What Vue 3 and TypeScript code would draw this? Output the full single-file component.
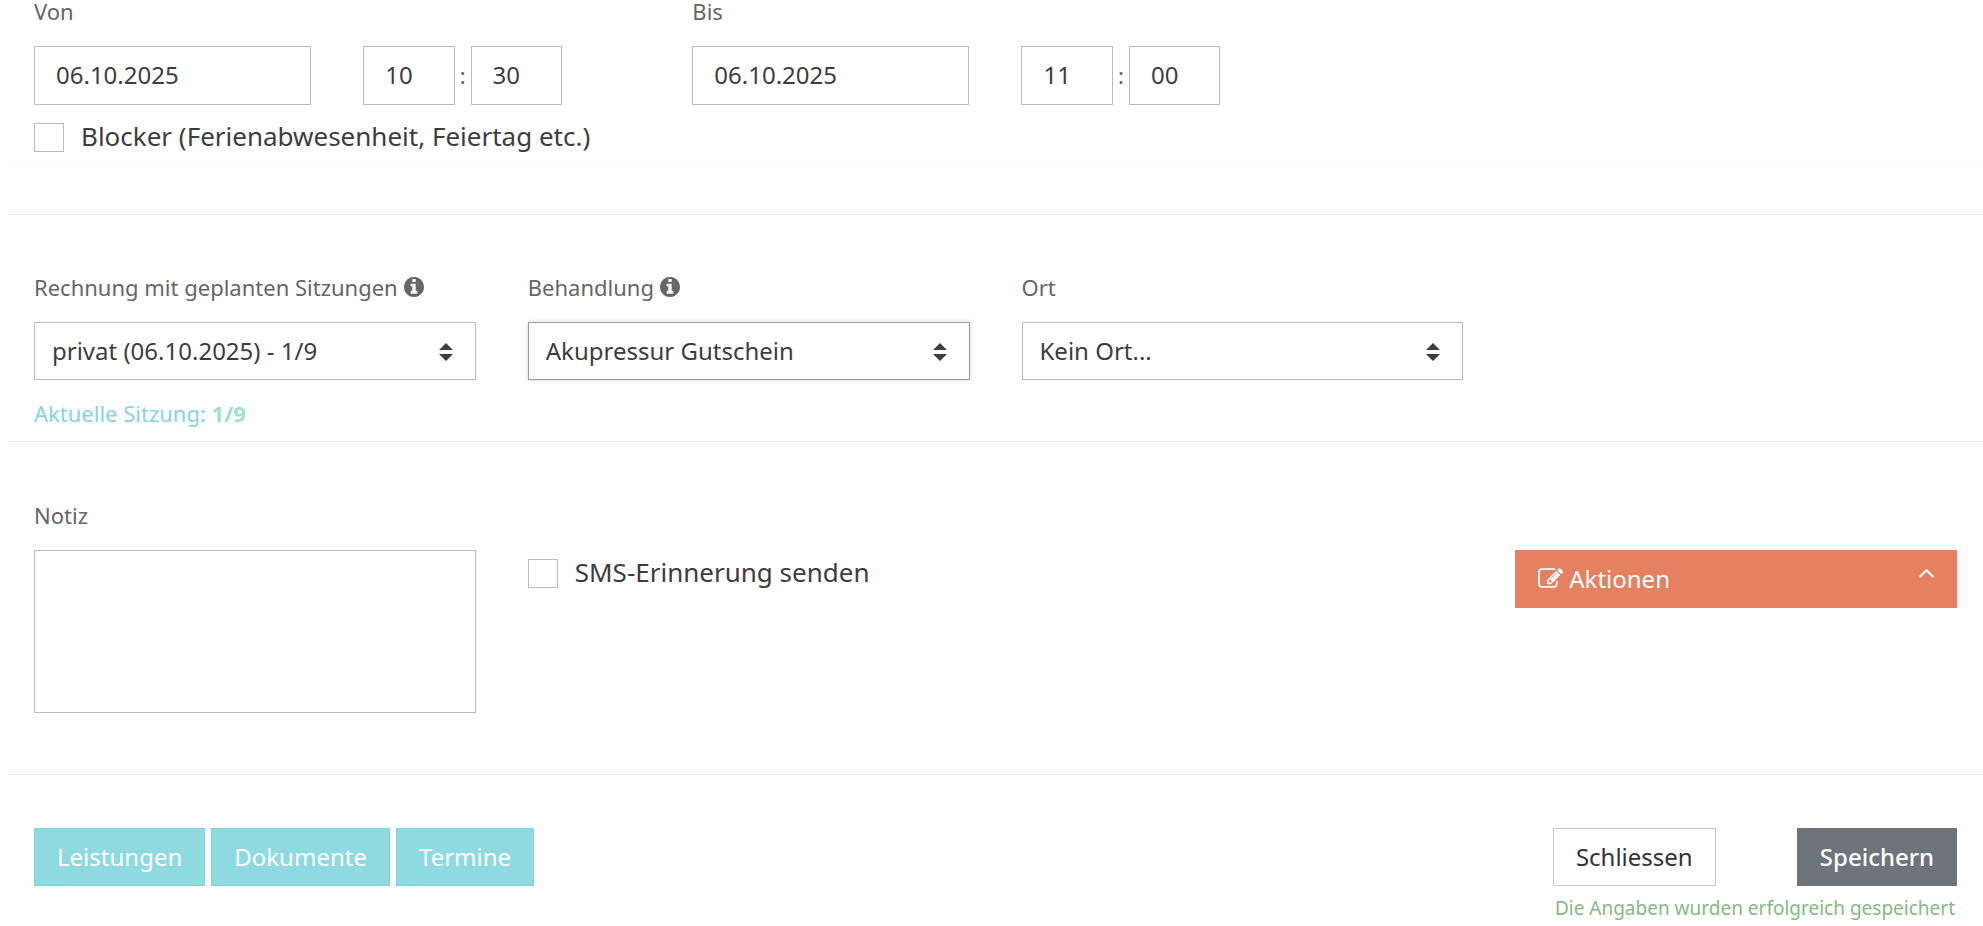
<script setup lang="ts">
import { reactive, ref } from 'vue'

interface Moment {
  id: string
  label: string
  date: string
  hour: string
  minute: string
}

interface Choice {
  id: string
  label: string
  info: boolean
  active: boolean
  value: string
  options: string[]
}

const moments = reactive<Moment[]>([
  { id: 'von', label: 'Von', date: '06.10.2025', hour: '10', minute: '30' },
  { id: 'bis', label: 'Bis', date: '06.10.2025', hour: '11', minute: '00' },
])

const choices = reactive<Choice[]>([
  {
    id: 'rechnung',
    label: 'Rechnung mit geplanten Sitzungen',
    info: true,
    active: false,
    value: 'privat (06.10.2025) - 1/9',
    options: ['privat (06.10.2025) - 1/9'],
  },
  {
    id: 'behandlung',
    label: 'Behandlung',
    info: true,
    active: true,
    value: 'Akupressur Gutschein',
    options: ['Akupressur Gutschein'],
  },
  {
    id: 'ort',
    label: 'Ort',
    info: false,
    active: false,
    value: 'Kein Ort...',
    options: ['Kein Ort...'],
  },
])

const links = ['Leistungen', 'Dokumente', 'Termine']
const blocker = ref(false)
const sms = ref(false)
const note = ref('')
</script>

<template>
  <form class="form" @submit.prevent>
    <section class="period">
      <div class="grid">
        <div v-for="m in moments" :key="m.id" class="moment">
          <div class="cell">
            <label class="label" :for="m.id">{{ m.label }}</label>
            <input :id="m.id" v-model="m.date" class="control field" type="text" />
          </div>
          <div class="cell time">
            <input v-model="m.hour" class="control field" type="text" :aria-label="m.label + ' Stunde'" />
            <span class="colon">:</span>
            <input v-model="m.minute" class="control field" type="text" :aria-label="m.label + ' Minute'" />
          </div>
        </div>
      </div>
      <label class="check blocker">
        <input v-model="blocker" type="checkbox" />
        <span>Blocker (Ferienabwesenheit, Feiertag etc.)</span>
      </label>
    </section>

    <section class="part choices">
      <div class="grid">
        <div v-for="c in choices" :key="c.id" class="cell">
          <label class="label" :for="c.id">
            {{ c.label }}
            <svg v-if="c.info" class="info" viewBox="128 128 1536 1536" aria-hidden="true">
              <path
                d="M1152 1376v-160q0-14-9-23t-23-9h-96v-512q0-14-9-23t-23-9h-320q-14 0-23 9t-9 23v160q0 14 9 23t23 9h96v320h-96q-14 0-23 9t-9 23v160q0 14 9 23t23 9h448q14 0 23-9t9-23zm-128-896v-160q0-14-9-23t-23-9h-192q-14 0-23 9t-9 23v160q0 14 9 23t23 9h192q14 0 23-9t9-23zm640 416q0 209-103 385.500t-279.500 279.500-385.500 103-385.500-103-279.500-279.500-103-385.500 103-385.500 279.500-279.500 385.500-103 385.500 103 279.500 279.500 103 385.500z"
              />
            </svg>
          </label>
          <div class="select">
            <select :id="c.id" v-model="c.value" class="control" :class="{ active: c.active }">
              <option v-for="o in c.options" :key="o">{{ o }}</option>
            </select>
            <svg class="arrows" viewBox="0 0 14 18" aria-hidden="true">
              <path d="M7 0l7 7H0zM0 11h14l-7 7z" />
            </svg>
          </div>
          <p v-if="c.id === 'rechnung'" class="session">Aktuelle Sitzung: <strong>1/9</strong></p>
        </div>
      </div>
    </section>

    <section class="part notes">
      <div class="grid">
        <div class="cell">
          <label class="label" for="notiz">Notiz</label>
          <textarea id="notiz" v-model="note" class="control"></textarea>
        </div>
        <div class="cell beside">
          <label class="check sms">
            <input v-model="sms" type="checkbox" />
            <span>SMS-Erinnerung senden</span>
          </label>
        </div>
        <div class="cell beside last">
          <button type="button" class="button actions">
            <svg class="edit" viewBox="0 128 1792 1408" aria-hidden="true">
              <path
                d="M888 1184l116-116-152-152-116 116v56h96v96h56zm440-720q-16-16-33 1l-350 350q-17 17-1 33t33-1l350-350q17-17 1-33zm80 594v190q0 119-84.500 203.500t-203.500 84.500h-832q-119 0-203.500-84.500t-84.500-203.500v-832q0-119 84.500-203.500t203.500-84.500h832q63 0 117 25 15 7 18 23 3 17-9 29l-49 49q-14 14-32 8-23-6-45-6h-832q-66 0-113 47t-47 113v832q0 66 47 113t113 47h832q66 0 113-47t47-113v-126q0-13 9-22l64-64q15-15 35-7t20 29zm-96-738l288 288-672 672h-288v-288zm444 132l-92 92-288-288 92-92q28-28 68-28t68 28l152 152q28 28 28 68t-28 68z"
              />
            </svg>
            <span>Aktionen</span>
            <svg class="chevron" viewBox="397 708 998 559" aria-hidden="true">
              <path
                d="M1395 1184q0 13-10 23l-50 50q-10 10-23 10t-23-10l-393-393-393 393q-10 10-23 10t-23-10l-50-50q-10-10-10-23t10-23l466-466q10-10 23-10t23 10l466 466q10 10 10 23z"
              />
            </svg>
          </button>
        </div>
      </div>
    </section>

    <footer class="part footer">
      <div class="links">
        <button v-for="l in links" :key="l" type="button" class="button teal">{{ l }}</button>
      </div>
      <div class="finish">
        <div class="finish-row">
          <button type="button" class="button plain">Schliessen</button>
          <button type="submit" class="button save">Speichern</button>
        </div>
        <p class="saved" role="status">Die Angaben wurden erfolgreich gespeichert</p>
      </div>
    </footer>
  </form>
</template>

<style>
body {
  background: #fefefe;
}
</style>

<style scoped>
.form {
  padding-left: 8px;
  color: #3d3d3d;
  font-family: 'Noto Sans', 'Open Sans', sans-serif;
  font-size: 24px;
}

.form *,
.form {
  box-sizing: border-box;
}

.grid {
  display: grid;
  grid-template-columns: repeat(4, 1fr);
}

.cell {
  min-width: 0;
  padding: 0 26px;
}

.period {
  padding-bottom: 9px;
  margin-bottom: 52px;
  background: #fff;
}

.period .grid {
  grid-template-columns: repeat(3, 1fr);
}

.moment {
  display: grid;
  grid-template-columns: 1fr 1fr;
  align-items: end;
}

.label {
  display: flex;
  align-items: center;
  gap: 6px;
  margin-bottom: 24px;
  color: #666;
  font-size: 22px;
  line-height: 22px;
}

.info {
  width: 20px;
  height: 20px;
  fill: #666;
}

.control {
  display: block;
  width: 100%;
  height: 58px;
  margin: 0;
  padding: 0 17px 2px;
  border: 1px solid #bbb;
  border-radius: 0;
  outline: 0;
  background: #fff;
  color: #3d3d3d;
  font: inherit;
  appearance: none;
}

.field {
  height: 59px;
  padding: 0 21px 2px;
}

.time {
  display: flex;
  align-items: center;
}

.time .field {
  flex: none;
  width: 33%;
}

.colon {
  width: 16px;
  padding-bottom: 2px;
  color: #666;
  font-size: 22px;
  line-height: 28px;
  text-align: center;
}

.check {
  display: flex;
  align-items: center;
  width: fit-content;
  gap: 17px;
  font-size: 26px;
  line-height: 29px;
}

.check span {
  padding-bottom: 2px;
}

.check input {
  flex: none;
  width: 30px;
  height: 29px;
  margin: 0;
  border: 1px solid #bbb;
  background: #fff;
  appearance: none;
}

.check input:checked {
  background: #8edae0;
}

.blocker {
  margin: 17px 26px 0;
}

.part {
  border-top: 1px solid #ebebeb;
}

.choices {
  padding: 61px 0 18px;
}

.select {
  position: relative;
}

.active {
  border-color: #999;
  box-shadow: 0 0 5px rgba(0, 0, 0, 0.15);
}

.arrows {
  position: absolute;
  top: 21px;
  right: 23px;
  width: 14px;
  height: 18px;
  fill: #3d3d3d;
  pointer-events: none;
}

.session {
  margin: 24px 0 0;
  color: #86d5db;
  font-size: 22px;
  line-height: 19px;
}

.session strong {
  color: #9bdfd6;
}

.notes {
  padding: 62px 0 61px;
}

.notes textarea {
  height: 163px;
  padding: 16px;
  resize: none;
}

.beside {
  padding-top: 46px;
}

.last {
  grid-column: 4;
}

.sms {
  margin-top: 8px;
}

.button {
  height: 58px;
  padding: 0 22px 2px;
  border: 1px solid transparent;
  border-radius: 0;
  color: #fff;
  font: inherit;
  cursor: pointer;
}

.actions {
  display: flex;
  align-items: center;
  width: 100%;
  gap: 6px;
  background: #e58161;
}

.edit {
  width: 25px;
  height: 20px;
  fill: #fff;
}

.chevron {
  width: 15px;
  height: 9px;
  margin: 0 0 10px auto;
  fill: #fff;
}

.footer {
  display: flex;
  justify-content: space-between;
  align-items: flex-start;
  padding: 53px 26px 8px;
}

.links {
  display: flex;
  gap: 6px;
}

.teal {
  border-color: #80d3d9;
  background: #8edae0;
}

.finish-row {
  display: flex;
  justify-content: space-between;
  gap: 80px;
}

.plain {
  border-color: #c8c8c8;
  background: #fff;
  color: #333;
}

.save {
  background: #6d757b;
  font-weight: 500;
}

.saved {
  margin: 12px 0 0;
  padding: 0 2px;
  color: #86b886;
  font-size: 19px;
  line-height: 20px;
  text-align: right;
}
</style>
